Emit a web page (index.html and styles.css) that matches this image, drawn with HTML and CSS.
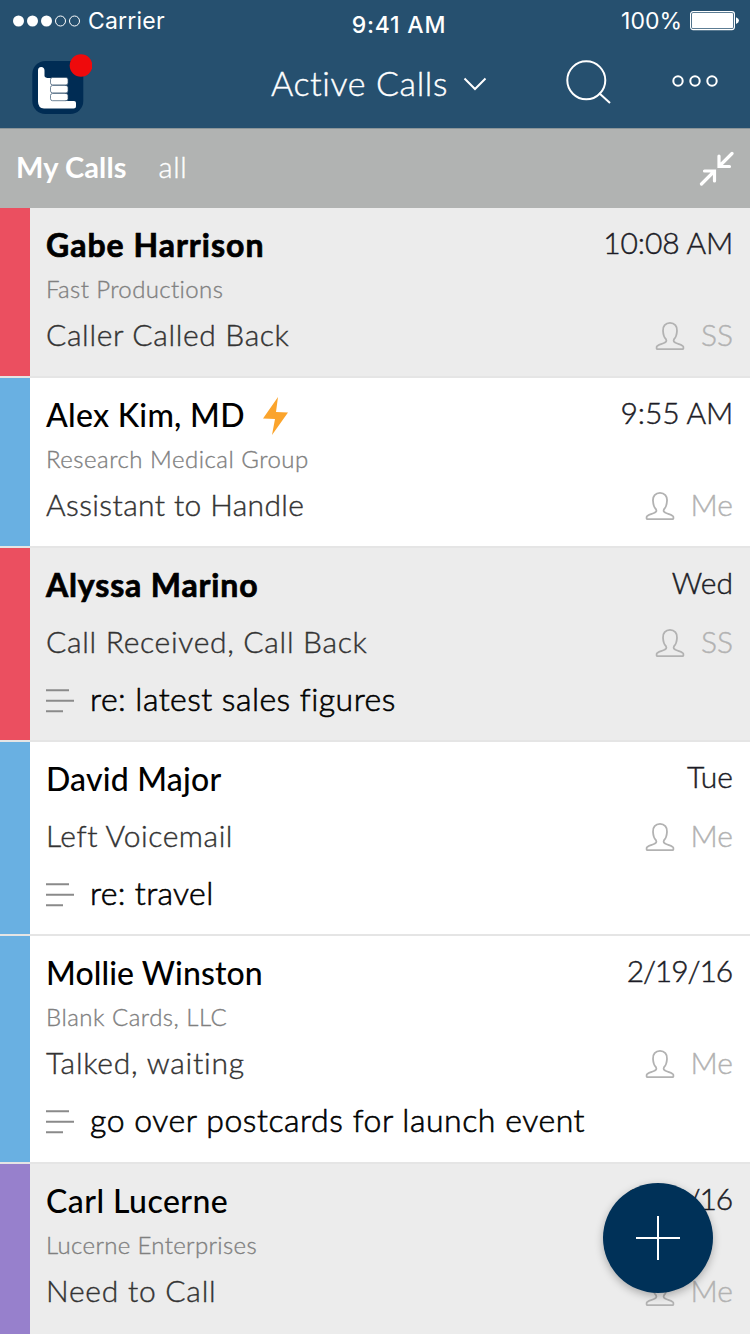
FILE: index.html
```html
<!DOCTYPE html>
<html lang="en">
<head>
<meta charset="utf-8">
<title>Active Calls</title>
<link rel="stylesheet" href="styles.css">
</head>
<body>
<svg width="0" height="0" class="defs">
  <symbol id="person" viewBox="0 0 30 30"><path d="M15 1.900C10.500 1.900 7.600 5.200 8 9.800C8.200 13.200 8.900 16.500 11 18.300C12 20.300 11 21.200 9 22C5.500 23.500 2 24.200 1.700 25.700C1.300 27.900 1.800 28.200 3 28.200H27C28.200 28.200 28.700 27.900 28.300 25.700C28 24.200 24.500 23.500 21 22C19 21.200 18 20.300 19 18.300C21.100 16.500 21.800 13.200 22 9.800C22.400 5.200 19.500 1.900 15 1.900Z" fill="none" stroke="#b2b2b2" stroke-width="1.800" stroke-linejoin="round"/></symbol>
  <symbol id="note" viewBox="0 0 28 24"><path d="M0 1.300H23M0 11.700H28M0 22.200H17" stroke="#8a8a8a" stroke-width="2"/></symbol>
</svg>
<div class="phone">
  <header class="top">
    <div class="status-bar">
      <div class="carrier">
        <svg width="68" height="12"><g fill="#fff"><circle cx="5.500" cy="6" r="5.500"/><circle cx="19.500" cy="6" r="5.500"/><circle cx="33.500" cy="6" r="5.500"/></g><g fill="none" stroke="#fff"><circle cx="47.500" cy="6" r="5"/><circle cx="61.500" cy="6" r="5"/></g></svg>
        <span class="carrier-name">Carrier</span>
      </div>
      <div class="clock">9:41 AM</div>
      <div class="battery">
        <span>100%</span>
        <svg width="49" height="20"><rect x=".6" y=".6" width="43.800" height="18" rx="2.500" fill="none" stroke="#fff" stroke-width="1.200"/><rect x="2" y="2" width="41" height="15.200" rx="1" fill="#fff"/><path d="M46 6.200Q49 7.500 49 9.600T46 13Z" fill="#fff"/></svg>
      </div>
    </div>
    <div class="nav">
      <svg class="logo" width="60" height="62" viewBox="0 0 60 62">
        <rect x=".3" y="8" width="51" height="53" rx="13" fill="#002c54"/>
        <path d="M6 17.500Q6 14 9.200 14T12.500 17.500V23Q13 25 17 25H33V48H42Q44 48 44 50V53Q44 55.500 41.500 55.500H12Q6 55 6 48.500Z" fill="#fff"/>
        <g fill="#fff" stroke="#35536e" stroke-width=".7"><rect x="18.500" y="24.500" width="17.500" height="7.400" rx="2"/><rect x="18.500" y="32.500" width="17.500" height="7.400" rx="2"/><rect x="18.500" y="40.500" width="17.500" height="7.200" rx="2"/></g>
        <circle cx="49" cy="12.500" r="11.300" fill="#ef0a0c"/>
      </svg>
      <div class="title"><span>Active Calls</span><svg width="24" height="14"><path d="M1.500 1.500L12 12L22.500 1.500" fill="none" stroke="#fff" stroke-width="2"/></svg></div>
      <svg class="search" width="46" height="46"><circle cx="20.300" cy="20.300" r="19" fill="none" stroke="#fff" stroke-width="2"/><path d="M33 33L44 43" stroke="#fff" stroke-width="2"/></svg>
      <svg class="more" width="46" height="12"><g fill="none" stroke="#fff" stroke-width="2"><circle cx="6" cy="6" r="4.700"/><circle cx="23" cy="6" r="4.700"/><circle cx="40" cy="6" r="4.700"/></g></svg>
    </div>
  </header>
  <nav class="filter">
    <span class="mine">My Calls</span><span class="all">all</span>
    <svg width="36" height="36"><path d="M3.500 33L16 20.500M6.500 20H16.500V30M34 2.500L22 14.500M21 5V15.500H31.500" fill="none" stroke="#fff" stroke-width="3.200" stroke-linecap="round"/></svg>
  </nav>
  <main class="list">
    <article class="call red unread">
      <div class="line"><h2 class="name n1">Gabe Harrison</h2><time class="time t-clock">10:08 AM</time></div>
      <p class="company c1">Fast Productions</p>
      <div class="line state"><span class="s1">Caller Called Back</span><span class="owner"><svg><use href="#person"/></svg>SS</span></div>
    </article>
    <article class="call blue">
      <div class="line"><h2 class="name n2">Alex Kim, MD</h2><svg class="bolt" width="26" height="38"><path d="M15 0L0 21.500L12 22L9 38L25 15.500L13 15Z" fill="#fba42c"/></svg><time class="time t-clock">9:55 AM</time></div>
      <p class="company c2">Research Medical Group</p>
      <div class="line state"><span class="s2">Assistant to Handle</span><span class="owner"><svg><use href="#person"/></svg>Me</span></div>
    </article>
    <article class="call red unread noted">
      <div class="line"><h2 class="name n3">Alyssa Marino</h2><time class="time">Wed</time></div>
      <div class="line state"><span class="s3">Call Received, Call Back</span><span class="owner"><svg><use href="#person"/></svg>SS</span></div>
      <p class="note"><svg><use href="#note"/></svg><span class="t3">re: latest sales figures</span></p>
    </article>
    <article class="call blue noted">
      <div class="line"><h2 class="name n4">David Major</h2><time class="time">Tue</time></div>
      <div class="line state"><span class="s4">Left Voicemail</span><span class="owner"><svg><use href="#person"/></svg>Me</span></div>
      <p class="note"><svg><use href="#note"/></svg><span class="t4">re: travel</span></p>
    </article>
    <article class="call blue full">
      <div class="line"><h2 class="name n5">Mollie Winston</h2><time class="time t-date">2/19/16</time></div>
      <p class="company c5">Blank Cards, LLC</p>
      <div class="line state"><span class="s5">Talked, waiting</span><span class="owner"><svg><use href="#person"/></svg>Me</span></div>
      <p class="note"><svg><use href="#note"/></svg><span class="t5">go over postcards for launch event</span></p>
    </article>
    <article class="call purple shaded">
      <div class="line"><h2 class="name n6">Carl Lucerne</h2><time class="time t-date">2/18/16</time></div>
      <p class="company c6">Lucerne Enterprises</p>
      <div class="line state"><span class="s6">Need to Call</span><span class="owner"><svg><use href="#person"/></svg>Me</span></div>
    </article>
  </main>
  <button class="add" aria-label="Add call"><svg width="44" height="44"><path d="M22 0V44M0 22H44" stroke="#fff" stroke-width="2"/></svg></button>
</div>
</body>
</html>
```
FILE: styles.css
```css
* { box-sizing: border-box; }
body, h2, p { margin: 0; }
body { font-family: Lato, sans-serif; font-variant-ligatures: none; }
.defs { position: absolute; }
.phone { position: relative; width: 750px; height: 1334px; overflow: hidden; background: #fff; }
svg { display: block; flex: none; }

.top { height: 128px; background: #26506f; color: #fff; }
.status-bar { height: 42px; padding: 0 11px 0 13px; display: grid; grid-template-columns: 1fr auto 1fr; align-items: start; font: 23px/28px Inter, sans-serif; }
.carrier { display: flex; align-items: center; gap: 7px; padding-top: 7px; }
.carrier-name { letter-spacing: .2px; }
.clock { padding: 11px 0 0 46px; font-weight: 500; letter-spacing: .8px; }
.battery { display: flex; align-items: center; justify-content: flex-end; gap: 8px; padding-top: 7px; }
.nav { height: 86px; display: flex; align-items: flex-start; padding: 11px 32px 0; }
.title { display: flex; align-items: center; margin-left: 179px; gap: 16px; font-size: 34px; line-height: 42px; font-weight: 300; padding-top: 9px; letter-spacing: .62px; -webkit-text-stroke: .4px; }
.title svg { margin-top: 1px; }
.title span { width: 176px; white-space: nowrap; }
.search { margin: 7px 0 0 79px; }
.more { margin: 22px 0 0 60px; }

.filter { height: 80px; padding: 0 16px; background: #b1b3b2; border-top: 1px solid #8b9599; color: #fff; display: flex; align-items: center; font-size: 29px; line-height: 36px; }
.filter span { padding-bottom: 4px; }
.mine { font-weight: 700; letter-spacing: .1px; }
.all { margin-left: 32px; font-weight: 300; letter-spacing: .6px; -webkit-text-stroke: .4px; }
.filter svg { margin-left: auto; }

.call { height: 170px; padding: 17px 17px 0 46px; border-bottom: 2px solid #e5e5e5; background: linear-gradient(var(--tag), var(--tag)) 0 0 / 30px 100% no-repeat #fff; }
.red { --tag: #eb4f60; }
.blue { --tag: #69b0e2; }
.purple { --tag: #9780cc; }
.call.unread, .call.shaded { background-color: #ececec; }
.call:last-child { border-bottom: 0; }
.noted { height: 194px; }
.full { height: 228px; }
.line { display: flex; align-items: flex-start; }
.name { font-size: 32px; line-height: 40px; font-weight: 500; color: #000; }
.unread .name { font-weight: 700; -webkit-text-stroke: .7px; }
.time { margin: -1px 0 0 auto; font-size: 30px; line-height: 36px; font-weight: 300; color: #1c1c26; -webkit-text-stroke: .45px; }
.t-clock { letter-spacing: -.15px; }
.t-date { letter-spacing: -1.1px; padding-right: 1px; }
.bolt { margin: 2px 0 0 18px; }
.company { margin-top: 9px; font-size: 24px; line-height: 30px; color: #808080; font-weight: 300; -webkit-text-stroke: .35px; }
.state { margin-top: 12px; font-size: 30px; line-height: 36px; color: #333; font-weight: 300; -webkit-text-stroke: .4px; }
.noted .state { margin-top: 18px; }
.owner { margin-left: auto; display: flex; gap: 16px; color: #b2b2b2; }
.owner svg { width: 30px; height: 30px; margin-top: 5px; }
.note { margin-top: 20px; display: flex; gap: 16px; font-size: 32px; line-height: 40px; font-weight: 300; color: #000; -webkit-text-stroke: .6px; letter-spacing: .55px; }
.note svg { width: 28px; height: 24px; margin-top: 10px; }

/* per-label tracking */
.n1 { letter-spacing: 1px; }
.n2 { letter-spacing: .27px; }
.n3 { letter-spacing: .85px; }
.n4 { letter-spacing: .2px; }
.n5 { letter-spacing: .08px; }
.n6 { letter-spacing: .45px; }
.c1 { letter-spacing: .38px; }
.c2, .c5 { letter-spacing: .5px; }
.c6 { letter-spacing: .34px; }
.s1 { letter-spacing: .65px; }
.s2 { letter-spacing: .38px; }
.s3 { letter-spacing: .7px; }
.s4 { letter-spacing: .55px; }
.s5 { letter-spacing: .77px; }
.s6 { letter-spacing: .76px; }
.t3 { letter-spacing: .47px; }
.t4 { letter-spacing: .35px; }

.add { position: absolute; left: 603px; top: 1183px; width: 110px; height: 110px; border: 0; border-radius: 50%; background: #003158; display: flex; align-items: center; justify-content: center; box-shadow: 0 3px 8px rgba(0,0,0,.28); }
```
